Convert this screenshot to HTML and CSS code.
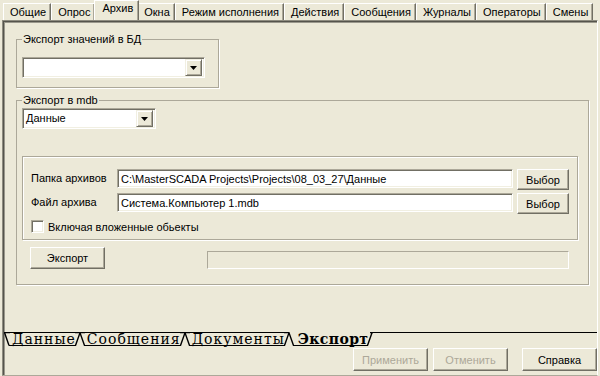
FILE: index.html
```html
<!DOCTYPE html>
<html lang="ru">
<head>
<meta charset="utf-8">
<title>Архив</title>
<link rel="stylesheet" href="styles.css">
</head>
<body>
<div class="tabs">
  <div class="tab">Общие</div>
  <div class="tab">Опрос</div>
  <div class="tab sel">Архив</div>
  <div class="tab">Окна</div>
  <div class="tab">Режим исполнения</div>
  <div class="tab">Действия</div>
  <div class="tab">Сообщения</div>
  <div class="tab">Журналы</div>
  <div class="tab">Операторы</div>
  <div class="tab">Смены</div>
</div>
<div class="panel">
  <fieldset class="grp g1">
    <legend>Экспорт значений в БД</legend>
    <div class="combo c1">
      <span class="val"></span>
      <span class="drop"><svg width="7" height="4" viewBox="0 0 7 4"><path d="M0 0h7L3.5 4z" fill="#000"/></svg></span>
    </div>
  </fieldset>
  <fieldset class="grp g2">
    <legend>Экспорт в mdb</legend>
    <div class="combo c2">
      <span class="val">Данные</span>
      <span class="drop"><svg width="7" height="4" viewBox="0 0 7 4"><path d="M0 0h7L3.5 4z" fill="#000"/></svg></span>
    </div>
    <div class="g3">
      <div class="row">
        <span class="lbl">Папка архивов</span>
        <div class="input">C:\MasterSCADA Projects\Projects\08_03_27\Данные</div>
        <button class="btn pick">Выбор</button>
      </div>
      <div class="row">
        <span class="lbl">Файл архива</span>
        <div class="input">Система.Компьютер 1.mdb</div>
        <button class="btn pick">Выбор</button>
      </div>
      <div class="chk"><span class="box"></span><span>Включая вложенные обьекты</span></div>
    </div>
    <div class="exprow">
      <button class="btn exp">Экспорт</button>
      <div class="progress"></div>
    </div>
  </fieldset>
  <div class="sheets">
    <svg class="edge" width="6" height="14" viewBox="0 0 6 14"><path d="M0 0.5H6M0.5 0.5L5 13.5" stroke="#000" stroke-width="1.4" fill="none"/></svg>
    <span class="sheet">Данные</span>
    <svg class="joint" width="10" height="14" viewBox="0 0 10 14"><path d="M0 0.5H10M0.5 13.5L5 0.8L9.5 13.5" stroke="#000" stroke-width="1.4" fill="none"/></svg>
    <span class="sheet">Сообщения</span>
    <svg class="joint" width="10" height="14" viewBox="0 0 10 14"><path d="M0 0.5H10M0.5 13.5L5 0.8L9.5 13.5" stroke="#000" stroke-width="1.4" fill="none"/></svg>
    <span class="sheet">Документы</span>
    <svg class="joint" width="10" height="14" viewBox="0 0 10 14"><path d="M0 0.5H5M0.5 13.5L5 0.8L9.5 13.5" stroke="#000" stroke-width="1.4" fill="none"/></svg>
    <span class="sheet cur">Экспорт</span>
    <svg class="edge" width="6" height="14" viewBox="0 0 6 14"><path d="M3 0.5H6M0.5 13.5L5 0.8" stroke="#000" stroke-width="1.4" fill="none"/></svg>
    <span class="fill"></span>
  </div>
  <div class="actions">
    <button class="btn act" disabled>Применить</button>
    <button class="btn act" disabled>Отменить</button>
    <button class="btn act help">Справка</button>
  </div>
</div>
</body>
</html>
```

FILE: styles.css
```css
html, body {
  margin: 0;
  padding: 0;
}
body {
  width: 600px;
  height: 376px;
  overflow: hidden;
  background: #ECE9D8;
  font: 11px "Liberation Sans", Arial, sans-serif;
  color: #000;
}

/* top tabs */
.tabs {
  display: flex;
  align-items: flex-end;
  height: 20px;
  padding-left: 3px;
}
.tab {
  box-sizing: border-box;
  height: 17px;
  padding: 1px 4px 0 6px;
  line-height: 15px;
  border-top: 1px solid #fff;
  border-left: 1px solid #fff;
  border-right: 1px solid #716F64;
  box-shadow: inset -1px 0 0 #ACA899;
  white-space: nowrap;
}
.tab.sel {
  height: 20px;
  margin: 0 -2px 0 -1px;
  padding: 0 5px 0 7px;
  position: relative;
  z-index: 1;
  background: #ECE9D8;
}

/* main panel */
.panel {
  box-sizing: border-box;
  height: 356px;
  margin: 0 2px;
  border-top: 1px solid #8E8C80;
  border-left: 1px solid #8E8C80;
  border-right: 1px solid #fff;
  border-bottom: 1px solid #ACA899;
  box-shadow: inset 1px 1px 0 #55544C, inset 2px 2px 0 #9A988C;
  overflow: hidden;
  display: flex;
  flex-direction: column;
  align-items: flex-start;
}

/* group boxes */
.grp {
  box-sizing: border-box;
  margin: 0 0 0 13px;
  border: 1px solid #ACA899;
  box-shadow: 1px 1px 0 #fff;
  min-width: 0;
}
.grp legend {
  padding: 0 1px;
  line-height: 13px;
}
.g1 {
  width: 203px;
  margin-top: 12px;
  padding: 11px 5px 9px 5px;
}
.g2 {
  width: 573px;
  margin-top: 6px;
  padding: 1px 10px 15px 5px;
}

/* combos */
.combo {
  box-sizing: border-box;
  height: 21px;
  display: flex;
  align-items: center;
  background: #fff;
  border: 1px solid;
  border-color: #ACA899 #fff #fff #ACA899;
  box-shadow: inset 1px 1px 0 #716F64, inset -1px -1px 0 #F1EFE2;
  padding: 1px 2px 1px 2px;
}
.c1 { width: 183px; }
.c2 { width: 134px; }
.combo .val {
  flex: 1;
  padding-left: 1px;
  line-height: 15px;
}
.drop {
  box-sizing: border-box;
  width: 17px;
  height: 17px;
  display: flex;
  align-items: center;
  justify-content: center;
  background: #ECE9D8;
  border: 1px solid;
  border-color: #F1EFE2 #716F64 #716F64 #F1EFE2;
  box-shadow: inset 1px 1px 0 #fff, inset -1px -1px 0 #ACA899;
}

/* inner group */
.g3 {
  box-sizing: border-box;
  width: 556px;
  margin-top: 27px;
  padding: 12px 8px 6px 8px;
  border: 1px solid #ACA899;
  box-shadow: 1px 1px 0 #fff, inset 1px 1px 0 #fff;
}
.row {
  display: flex;
  align-items: flex-start;
  height: 21px;
  margin-bottom: 3px;
}
.lbl {
  width: 86px;
  line-height: 19px;
  white-space: nowrap;
}
.input {
  box-sizing: border-box;
  flex: 1;
  height: 19px;
  line-height: 15px;
  padding: 2px 3px;
  background: #fff;
  border: 1px solid;
  border-color: #ACA899 #fff #fff #ACA899;
  box-shadow: inset 1px 1px 0 #716F64, inset -1px -1px 0 #F1EFE2;
  white-space: nowrap;
  overflow: hidden;
}

/* buttons */
.btn {
  box-sizing: border-box;
  margin: 0;
  padding: 0;
  font: inherit;
  color: #000;
  background: #ECE9D8;
  border: 1px solid;
  border-color: #fff #716F64 #716F64 #fff;
  box-shadow: inset -1px -1px 0 #ACA899;
  border-radius: 0;
}
.pick {
  width: 52px;
  height: 21px;
  margin-left: 4px;
}
.chk {
  display: flex;
  align-items: center;
  margin-top: 6px;
  gap: 4px;
}
.box {
  box-sizing: border-box;
  width: 13px;
  height: 13px;
  background: #fff;
  border: 1px solid;
  border-color: #ACA899 #fff #fff #ACA899;
  box-shadow: inset 1px 1px 0 #716F64, inset -1px -1px 0 #F1EFE2;
}

.exprow {
  display: flex;
  align-items: flex-start;
  margin-top: 7px;
}
.exp {
  width: 75px;
  height: 22px;
  margin-left: 8px;
}
.progress {
  box-sizing: border-box;
  width: 362px;
  height: 18px;
  margin: 4px 0 0 102px;
  border: 1px solid;
  border-color: #ACA899 #fff #fff #ACA899;
}

/* sheet tabs */
.sheets {
  display: flex;
  align-self: stretch;
  height: 14px;
  margin-top: 47px;
  padding-left: 1px;
  font-family: "DejaVu Serif", "Liberation Serif", serif;
  font-size: 14px;
  line-height: 12px;
  letter-spacing: 1px;
}
.sheets svg {
  display: block;
  flex: none;
}
.sheet {
  box-sizing: border-box;
  height: 14px;
  border-top: 1px solid #000;
  border-bottom: 1px solid #000;
  padding: 0 0 0 3px;
  margin: 0 -1px;
  white-space: nowrap;
}
.sheet.cur {
  border-top-color: transparent;
  font-weight: bold;
  letter-spacing: 0.4px;
  padding-left: 5px;
}
.fill {
  flex: 1;
  border-top: 1px solid #000;
  height: 14px;
  box-sizing: border-box;
}

/* bottom actions */
.actions {
  display: flex;
  align-self: stretch;
  justify-content: flex-end;
  margin-top: 2px;
  padding-right: 0;
}
.act {
  width: 75px;
  height: 23px;
  margin-left: 5px;
}
.act:disabled {
  color: #ACA899;
}
.help {
  margin-left: 14px;
}
```
